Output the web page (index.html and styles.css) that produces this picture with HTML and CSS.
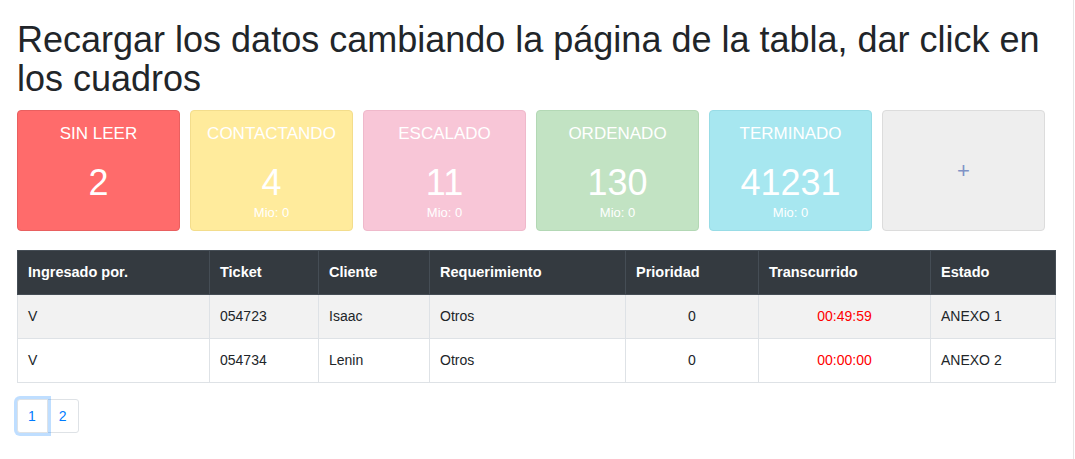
FILE: index.html
```html
<!DOCTYPE html>
<html lang="es">
<head>
<meta charset="utf-8">
<title>Tickets</title>
<link rel="stylesheet" href="styles.css">
</head>
<body>
<div class="page">
  <h1 class="title">Recargar los datos cambiando la página de la tabla, dar click en los cuadros</h1>
  <div class="cards">
    <div class="card card-red">
      <div class="card-title">SIN LEER</div>
      <div class="card-num">2</div>
      <div class="card-mio"></div>
    </div>
    <div class="card card-yellow">
      <div class="card-title">CONTACTANDO</div>
      <div class="card-num">4</div>
      <div class="card-mio">Mio: 0</div>
    </div>
    <div class="card card-pink">
      <div class="card-title">ESCALADO</div>
      <div class="card-num">11</div>
      <div class="card-mio">Mio: 0</div>
    </div>
    <div class="card card-green">
      <div class="card-title">ORDENADO</div>
      <div class="card-num">130</div>
      <div class="card-mio">Mio: 0</div>
    </div>
    <div class="card card-cyan">
      <div class="card-title">TERMINADO</div>
      <div class="card-num">41231</div>
      <div class="card-mio">Mio: 0</div>
    </div>
    <div class="card card-add">
      <span class="plus">+</span>
    </div>
  </div>
  <table class="tickets">
    <colgroup>
      <col class="c1"><col class="c2"><col class="c3"><col class="c4"><col class="c5"><col class="c6"><col class="c7">
    </colgroup>
    <thead>
      <tr>
        <th>Ingresado por.</th>
        <th>Ticket</th>
        <th>Cliente</th>
        <th>Requerimiento</th>
        <th>Prioridad</th>
        <th>Transcurrido</th>
        <th>Estado</th>
      </tr>
    </thead>
    <tbody>
      <tr class="striped">
        <td>V</td>
        <td>054723</td>
        <td>Isaac</td>
        <td>Otros</td>
        <td class="center">0</td>
        <td class="center time">00:49:59</td>
        <td>ANEXO 1</td>
      </tr>
      <tr>
        <td>V</td>
        <td>054734</td>
        <td>Lenin</td>
        <td>Otros</td>
        <td class="center">0</td>
        <td class="center time">00:00:00</td>
        <td>ANEXO 2</td>
      </tr>
    </tbody>
  </table>
  <div class="pagination">
    <a class="page-link active">1</a>
    <a class="page-link last">2</a>
  </div>
</div>
</body>
</html>
```
FILE: styles.css
```css
* { box-sizing: border-box; }
html, body { margin: 0; padding: 0; background: #fff; }
body {
  font-family: "Liberation Sans", Arial, sans-serif;
  color: #212529;
}
.page {
  width: 1074px;
  min-height: 100vh;
  border-right: 1px solid #e6e6e6;
  padding: 20px 19px 0 17px;
}
.title {
  margin: 0 0 12px 0;
  font-size: 36px;
  font-weight: 400;
  line-height: 39px;
  color: #212529;
}
.cards {
  display: flex;
  gap: 10px;
  width: 1028px;
}
.card {
  width: 163px;
  height: 121px;
  border: 1px solid;
  border-radius: 4px;
  color: #fff;
  text-align: center;
  padding-top: 13px;
  display: flex;
  flex-direction: column;
}
.card-title { font-size: 17px; line-height: 20px; }
.card-num { font-size: 36px; line-height: 40px; margin-top: 19px; }
.card-mio { font-size: 13px; line-height: 15px; margin-top: 2px; min-height: 15px; }
.card-red { background: #ff6b6b; border-color: #e96060; }
.card-yellow { background: #ffeb9c; border-color: #f3dd8c; }
.card-pink { background: #f8c6d7; border-color: #efb9cb; }
.card-green { background: #c2e3c3; border-color: #b3d8b5; }
.card-cyan { background: #a7e7f0; border-color: #98dce6; }
.card-add {
  background: #eeeeee;
  border-color: #dcdcdc;
  padding: 0;
  align-items: center;
  justify-content: center;
}
.plus { color: #8093c6; font-size: 22px; line-height: 22px; }
.tickets {
  margin-top: 19px;
  width: 1038px;
  border-collapse: collapse;
  table-layout: fixed;
  font-size: 14px;
}
.c1 { width: 192px; }
.c2 { width: 109px; }
.c3 { width: 111px; }
.c4 { width: 196px; }
.c5 { width: 133px; }
.c6 { width: 172px; }
.c7 { width: 125px; }
.tickets th, .tickets td {
  padding: 12px 10px;
  line-height: 19px;
  text-align: left;
  vertical-align: middle;
}
.tickets th {
  background: #343a40;
  color: #fff;
  font-size: 14.5px;
  font-weight: 700;
  border: 1px solid #454d55;
}
.tickets td { border: 1px solid #dee2e6; }
.tickets tr.striped td { background: #f2f2f2; }
.tickets td.center { text-align: center; }
.tickets td.time { color: #ff0000; }
.pagination {
  display: flex;
  margin-top: 16px;
}
.page-link {
  display: block;
  font-size: 14px;
  line-height: 16px;
  padding: 8px 11px;
  color: #007bff;
  border: 1px solid #dee2e6;
  background: #fff;
  position: relative;
}
.page-link.active {
  padding: 8px 11px 8px 10px;
  border-radius: 3px 0 0 3px;
  box-shadow: 0 0 0 3px rgba(0, 123, 255, 0.25);
  z-index: 2;
}
.page-link.last {
  margin-left: -1px;
  border-radius: 0 3px 3px 0;
}
```
